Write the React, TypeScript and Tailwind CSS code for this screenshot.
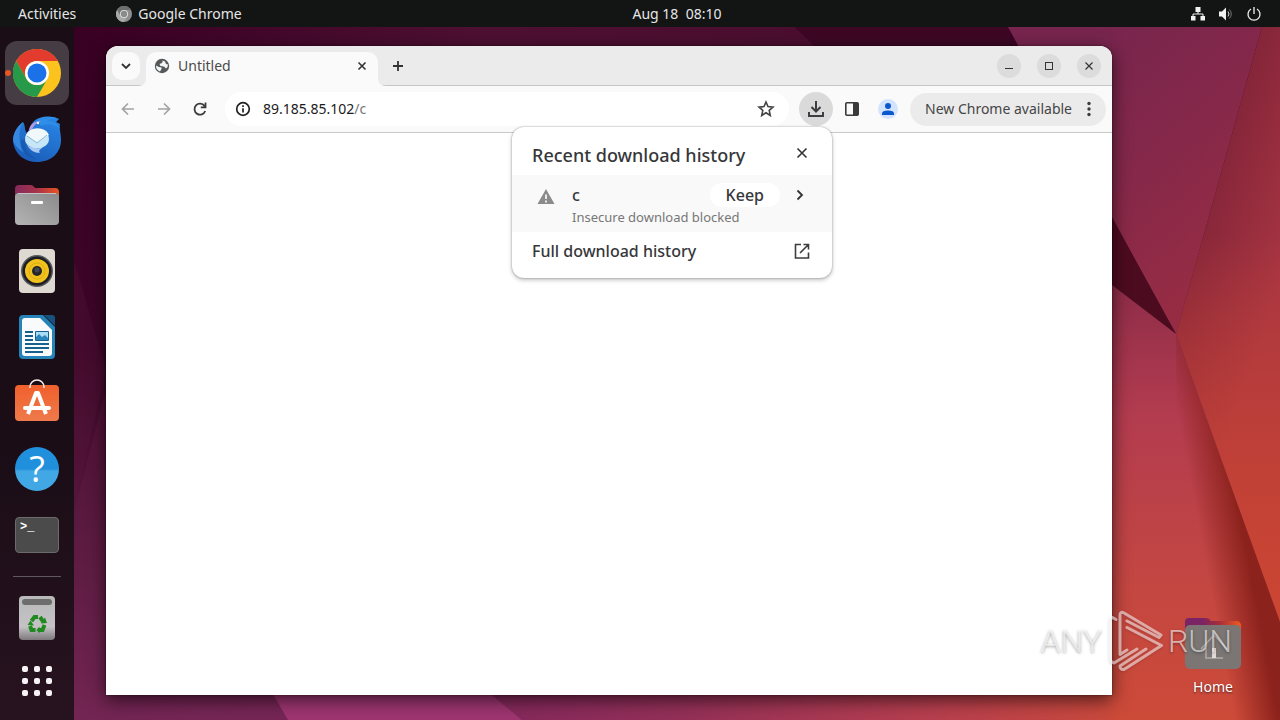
import type { ReactNode } from "react";
import { clsx } from "clsx";

interface DockItem {
  name: string;
  icon: ReactNode;
  active?: boolean;
}

function Wallpaper() {
  return (
    <svg
      className="absolute inset-0 h-full w-full"
      viewBox="0 0 1280 720"
      preserveAspectRatio="none"
      aria-hidden="true"
    >
      <defs>
        <linearGradient id="base" gradientUnits="userSpaceOnUse" x1="80" y1="27" x2="200" y2="720">
          <stop offset="0" stopColor="#380023" />
          <stop offset="0.45" stopColor="#3d0628" />
          <stop offset="0.75" stopColor="#5a1a3f" />
          <stop offset="1" stopColor="#792757" />
        </linearGradient>
        <linearGradient id="top" x1="0" y1="0" x2="1" y2="0">
          <stop offset="0" stopColor="#561538" stopOpacity="0" />
          <stop offset="0.5" stopColor="#561538" stopOpacity="0.7" />
          <stop offset="1" stopColor="#4a0d2e" />
        </linearGradient>
        <linearGradient id="bottom" gradientUnits="userSpaceOnUse" x1="490" y1="0" x2="1130" y2="0">
          <stop offset="0" stopColor="#84285c" />
          <stop offset="0.3" stopColor="#943058" />
          <stop offset="0.7" stopColor="#b83f4e" />
          <stop offset="1" stopColor="#cb4a3a" />
        </linearGradient>
        <linearGradient id="upper" gradientUnits="userSpaceOnUse" x1="1060" y1="60" x2="1230" y2="260">
          <stop offset="0" stopColor="#77254e" />
          <stop offset="0.5" stopColor="#85284a" />
          <stop offset="1" stopColor="#962c44" />
        </linearGradient>
        <linearGradient id="right" gradientUnits="userSpaceOnUse" x1="1200" y1="200" x2="1300" y2="235">
          <stop offset="0" stopColor="#842539" />
          <stop offset="1" stopColor="#a83542" />
        </linearGradient>
        <linearGradient id="warm" x1="0" y1="0" x2="0" y2="1">
          <stop offset="0.35" stopColor="#cc4632" stopOpacity="0" />
          <stop offset="0.75" stopColor="#cc4632" stopOpacity="0.7" />
          <stop offset="1" stopColor="#cc4632" />
        </linearGradient>
        <linearGradient id="lower" x1="0" y1="0" x2="0" y2="1">
          <stop offset="0" stopColor="#8e2c49" />
          <stop offset="0.3" stopColor="#b33c4f" />
          <stop offset="0.7" stopColor="#c44741" />
          <stop offset="1" stopColor="#cc4a38" />
        </linearGradient>
        <linearGradient id="fold" gradientUnits="userSpaceOnUse" x1="1202" y1="545" x2="1244" y2="537">
          <stop offset="0" stopColor="#8c221c" stopOpacity="0" />
          <stop offset="0.5" stopColor="#8c221c" stopOpacity="0.5" />
          <stop offset="1" stopColor="#8c221c" />
        </linearGradient>
      </defs>
      <rect width="1280" height="720" fill="url(#base)" />
      <path d="M74 27H795L870 100H74Z" fill="url(#top)" />
      <path d="M795 27H1010V100H870Z" fill="#3d0724" />
      <path d="M74 260L106 370L74 510Z" fill="#5d1c43" opacity="0.2" />
      <path d="M106 390L74 510V720H287L260 670Z" fill="#6b2450" opacity="0.25" />
      <path d="M259 670L288 720H522L462 670Z" fill="#9e3571" />
      <path d="M462 670L522 720H1130V670Z" fill="url(#bottom)" />
      <path d="M1008 27H1262L1176 334Z" fill="url(#upper)" />
      <path d="M1262 27H1280V622L1176 334Z" fill="url(#right)" />
      <path d="M1262 27H1280V622L1176 334Z" fill="url(#warm)" />
      <path d="M1112 218L1176 334L1112 285L1060 250Z" fill="#4d0b20" />
      <path d="M1112 285L1176 334L1280 622V720H1112Z" fill="url(#lower)" />
      <path d="M1176 334L1280 622V720H1180Z" fill="url(#fold)" />
    </svg>
  );
}

function ChromeLogo({ className, mono = false }: { className?: string; mono?: boolean }) {
  return (
    <svg className={className} viewBox="0 0 48 48" aria-hidden="true">
      <circle cx="24" cy="24" r="24" fill={mono ? "#8f8f8f" : "#fcc31e"} />
      <path
        d="M3.2 12A24 24 0 0 1 44.8 12H24A12 12 0 0 0 13.6 30Z"
        fill={mono ? "#6e6e6e" : "#e33b2e"}
      />
      <path
        d="M3.2 12L13.6 30A12 12 0 0 0 34.4 30L24 48A24 24 0 0 1 3.2 12Z"
        fill={mono ? "#a8a8a8" : "#269a48"}
      />
      <circle cx="24" cy="24" r="12" fill={mono ? "#e3e3e3" : "#fff"} />
      <circle cx="24" cy="24" r="9.5" fill={mono ? "#8a8a8a" : "#1b72e8"} />
    </svg>
  );
}

function ThunderbirdIcon() {
  return (
    <svg className="h-12 w-12" viewBox="0 0 48 48" aria-hidden="true">
      <defs>
        <linearGradient id="bird" x1="0.8" y1="0" x2="0.3" y2="1">
          <stop offset="0" stopColor="#2a86e6" />
          <stop offset="1" stopColor="#1a5cb8" />
        </linearGradient>
      </defs>
      <path
        d="M10 7C3 13 0 19 0 27C2 40 12 47 24 47C38 47 48 38 48 25C48 18 46 14 47 9L43 7L46 4C37 0 27 1 21 6C17 10 17 14 14 18C11 16 13 11 10 7Z"
        fill="url(#bird)"
      />
      <path d="M10 7C5 15 5 29 12 38C4 34 0 28 0 24C1 16 5 11 10 7Z" fill="#3488e0" />
      <path d="M14 22C10 30 13 39 24 44C14 43 6 36 8 26Z" fill="#1450a0" opacity="0.5" />
      <path d="M25 4C32 1 40 1 46 4C41 3 37 4 34 6C42 6 45 10 47 13C38 8 33 9 28 11Z" fill="#2f8fe8" />
      <path d="M16 15C17 9 22 6 28 6C23 8 20 11 19 15Z" fill="#b49be0" />
      <ellipse cx="24" cy="24" rx="12" ry="9.5" fill="#c7e6f8" />
      <path d="M13 20L24 27L36 20A12 9.500 0 0 0 13 20Z" fill="#f0f8fc" />
      <path d="M14 21L24 28L34 20" fill="none" stroke="#8fbbd0" />
      <path d="M14 30C20 34 27 34 31 32C27 34 25 36 27 38C21 38 17 35 14 30Z" fill="#a9c8f4" />
      <circle cx="25" cy="8" r="1.2" fill="#e9f5ff" />
    </svg>
  );
}

function FilesIcon() {
  return (
    <svg className="h-10 w-[46px]" viewBox="0 0 46 40" aria-hidden="true">
      <defs>
        <linearGradient id="tab">
          <stop offset="0" stopColor="#842a5c" />
          <stop offset="0.5" stopColor="#a8324a" />
          <stop offset="1" stopColor="#e95420" />
        </linearGradient>
        <linearGradient id="folder" x1="1" y1="0" x2="0" y2="1">
          <stop offset="0" stopColor="#8b8b8b" />
          <stop offset="1" stopColor="#b4b4b4" />
        </linearGradient>
      </defs>
      <path d="M1 4Q1 0 5 0H17Q19 0 21 3H41Q45 3 45 7V20H1Z" fill="url(#tab)" />
      <rect x="1" y="8" width="44" height="32" rx="4" fill="url(#folder)" />
      <path d="M4 8.500H42" stroke="#c4c4c4" />
      <rect x="17" y="16" width="12" height="3" rx="1" fill="#fff" />
    </svg>
  );
}

function RhythmboxIcon() {
  return (
    <svg className="h-11 w-9" viewBox="0 0 36 44" aria-hidden="true">
      <rect width="36" height="44" rx="4" fill="#dedad2" />
      <circle cx="18" cy="22" r="16" fill="#55585c" />
      <circle cx="18" cy="22" r="14.500" fill="#1c1e22" />
      <circle cx="18" cy="22" r="12" fill="#f2c21c" />
      <circle cx="18" cy="22" r="8" fill="none" stroke="#dcae14" />
      <circle cx="18" cy="22" r="5" fill="#23262b" />
      <circle cx="18" cy="21" r="2.500" fill="#42474f" />
    </svg>
  );
}

function WriterIcon() {
  return (
    <svg className="h-11 w-9" viewBox="0 0 36 44" aria-hidden="true">
      <path d="M4 0H24L36 12V40Q36 44 32 44H4Q0 44 0 40V4Q0 0 4 0Z" fill="#2583b7" />
      <path d="M6 3H21L33 15V38Q33 41 30 41H6Q3 41 3 38V6Q3 3 6 3Z" fill="#f8fafb" />
      <path d="M25 0H33Q36 0 36 3V11Z" fill="#17527c" />
      <g fill="#14608f">
        <path d="M6 16H14V18H6ZM6 20H14V22H6ZM6 24H14V26H6ZM6 28H30V30H6ZM6 32H30V34H6ZM6 36H24V38H6Z" />
        <rect x="16" y="16" width="14" height="10" rx="1" />
      </g>
      <rect x="17" y="17" width="12" height="8" fill="#a9dcf5" />
      <path d="M17 25V22L20 19L23 22L26 20L29 23V25Z" fill="#2b85bc" />
    </svg>
  );
}

function SoftwareIcon() {
  return (
    <svg className="h-12 w-11" viewBox="0 0 44 48" aria-hidden="true">
      <defs>
        <linearGradient id="bag" x1="0" y1="0" x2="0" y2="1">
          <stop offset="0" stopColor="#f0602c" />
          <stop offset="1" stopColor="#ef7a4c" />
        </linearGradient>
      </defs>
      <rect y="6" width="44" height="36" rx="4" fill="url(#bag)" />
      <path d="M15 9V8A7 7 0 0 1 29 8V9" fill="none" stroke="#f4f1ec" strokeWidth="1.500" />
      <path d="M13 35L21 14H23L31 35" fill="none" stroke="#fff" strokeWidth="4" strokeLinejoin="round" />
      <rect x="8" y="27" width="28" height="4" rx="2" fill="#fff" />
    </svg>
  );
}

function HelpIcon() {
  return (
    <span className="flex h-11 w-11 items-center justify-center rounded-full bg-linear-to-b from-[#2190dc] from-50% to-[#42a8e5] to-55% font-['Open_Sans'] text-[36px] leading-none text-white">
      ?
    </span>
  );
}

function TerminalIcon() {
  return (
    <span className="flex h-9 w-11 items-start rounded-[4px] border border-[#6b6b6b] bg-[#4b4b4b] px-1 pt-px font-['Liberation_Mono'] text-[12px] leading-4 font-bold text-white">
      &gt;_
    </span>
  );
}

function TrashIcon() {
  return (
    <svg className="h-11 w-9" viewBox="0 0 36 44" aria-hidden="true">
      <defs>
        <linearGradient id="bin" x1="0" y1="0" x2="0" y2="1">
          <stop offset="0" stopColor="#b9b9b9" />
          <stop offset="0.7" stopColor="#c4c2c5" />
          <stop offset="1" stopColor="#7c787c" />
        </linearGradient>
      </defs>
      <rect width="36" height="44" rx="4" fill="url(#bin)" />
      <rect x="3" y="3" width="30" height="6" rx="3" fill="#6d6d6d" />
      <g fill="none" stroke="#1f8a20" strokeWidth="4">
        <path d="M12.500 25L15.500 21H19" />
        <path d="M21 21L24.500 26" />
        <path d="M25.500 29L23.500 34H19.500" />
        <path d="M16.500 34H12.500L11 30" />
      </g>
      <g fill="#1f8a20">
        <path d="M22 27.500L28 27L26 21.500Z" />
        <path d="M20.500 30.500V37.500L17.500 34Z" />
        <path d="M8.500 29L15 29.500L11.500 24.500Z" />
      </g>
    </svg>
  );
}

function HomeFolderIcon() {
  return (
    <svg className="h-[52px] w-14" viewBox="0 0 56 52" aria-hidden="true">
      <defs>
        <linearGradient id="homeTab">
          <stop offset="0.3" stopColor="#7a2465" />
          <stop offset="0.6" stopColor="#a52c3c" />
          <stop offset="1" stopColor="#f05a22" />
        </linearGradient>
      </defs>
      <path d="M0 5Q0 1 4 1H21Q24 1 26 4H51Q56 4 56 9V20H0Z" fill="url(#homeTab)" />
      <rect y="8" width="56" height="44" rx="5" fill="#7b7673" />
      <path d="M16 32L29 18L42 32M20 41H38M21 31V40" fill="none" stroke="#b4aba8" strokeWidth="1.500" />
      <rect x="27" y="31" width="4" height="10" fill="#e2d8d5" />
    </svg>
  );
}

function Watermark() {
  return (
    <div className="pointer-events-none absolute right-[48px] bottom-[47px] flex h-16 items-center gap-1 font-['Roboto',sans-serif] text-[32px] leading-none font-light text-white/60 [text-shadow:0_1px_3px_#00000060]">
      <span>ANY</span>
      <svg className="h-16 w-[58px] drop-shadow-[0_1px_1px_#00000040]" viewBox="0 0 58 64" fill="none" aria-hidden="true">
        <g stroke="#fff" strokeOpacity="0.550" strokeWidth="3" strokeLinejoin="round" strokeLinecap="round">
          <path d="M10 10.500L6.500 8.500Q4 9 4 12.500V49Q4 53 8 54L31 40" />
          <path d="M21 41L14 45.500V6Q14 2 18 4L55 26L53 28.500L21 12" />
          <path d="M21 18.500L55.500 36.500L18 60.500Q14 61 14 57L40 40" />
        </g>
      </svg>
      <span>RUN</span>
    </div>
  );
}

const dockItems: DockItem[] = [
  { name: "Google Chrome", icon: <ChromeLogo className="h-12 w-12" />, active: true },
  { name: "Thunderbird Mail", icon: <ThunderbirdIcon /> },
  { name: "Files", icon: <FilesIcon /> },
  { name: "Rhythmbox", icon: <RhythmboxIcon /> },
  { name: "LibreOffice Writer", icon: <WriterIcon /> },
  { name: "Ubuntu Software", icon: <SoftwareIcon /> },
  { name: "Help", icon: <HelpIcon /> },
  { name: "Terminal", icon: <TerminalIcon /> },
];

function TopBar() {
  return (
    <header className="relative grid h-[27px] shrink-0 grid-cols-3 items-center bg-[#131414] px-[18px] text-[14px] leading-5 text-[#e6e6e6]">
      <div className="flex items-center gap-10">
        <button type="button">Activities</button>
        <button type="button" className="flex items-center gap-1.5">
          <ChromeLogo className="h-4 w-4" mono />
          Google Chrome
        </button>
      </div>
      {/* centred over the area right of the dock */}
      <button type="button" className="ml-[74px] justify-self-center whitespace-pre">
        Aug 18{"  "}08:10
      </button>
      <button type="button" className="flex items-center gap-3 justify-self-end" aria-label="System menu">
        <svg className="h-4 w-4" viewBox="0 0 16 16" fill="#f2f2f2" aria-hidden="true">
          <path d="M5.500 1H10.500V6H5.500ZM1 10H5.500V14.500H1ZM10.500 10H15V14.500H10.500Z" />
          <path d="M8 5V8M3 11V8H13V11" fill="none" stroke="#f2f2f2" />
        </svg>
        <svg className="h-4 w-4" viewBox="0 0 16 16" fill="#f2f2f2" aria-hidden="true">
          <path d="M1 5.500H4L8 1.500V14.500L4 10.500H1Z" />
          <path d="M10 5.500Q12 8 10 10.500" fill="none" stroke="#d8d8d8" />
          <path d="M11.500 3.500Q15 8 11.500 12.500" fill="none" stroke="#777" />
        </svg>
        <svg className="h-4 w-4" viewBox="0 0 16 16" fill="none" stroke="#f2f2f2" aria-hidden="true">
          <path d="M8 1V8M5 3A6 6 0 1 0 11 3" strokeWidth="1.300" />
        </svg>
      </button>
    </header>
  );
}

function Dock() {
  return (
    <nav className="flex w-[74px] shrink-0 flex-col items-center bg-linear-to-b from-[#1a0d16] from-60% to-[#27131f] pt-3.5" aria-label="Dock">
      <ul className="flex flex-col gap-0.5">
        {dockItems.map((item) => (
          <li key={item.name} className="relative">
            {item.active && (
              <span className="absolute top-[29px] left-0 h-1.5 w-1.5 rounded-full bg-[#e95420]" />
            )}
            <button
              type="button"
              aria-label={item.name}
              className={clsx(
                "flex h-16 w-16 items-center justify-center rounded-xl",
                item.active && "bg-[#463c43]"
              )}
            >
              {item.icon}
            </button>
          </li>
        ))}
      </ul>
      <hr className="mt-[9px] w-12 border-[#615760]" />
      <button type="button" aria-label="Trash" className="mt-[9px] flex h-16 w-16 items-center justify-center">
        <TrashIcon />
      </button>
      <button type="button" aria-label="Show Applications" className="flex h-16 w-16 items-center justify-center pb-0.5">
        <span className="grid grid-cols-3 gap-1.5">
          {Array.from({ length: 9 }, (_, i) => (
            <span key={i} className="h-1.5 w-1.5 rounded-[2px] bg-[#f7f3f5]" />
          ))}
        </span>
      </button>
    </nav>
  );
}

function TabStrip() {
  return (
    <div className="flex h-10 bg-[#ebebeb] shadow-[inset_0_-1px_#c6c6c6]">
      <div className="relative z-10 flex w-10 items-center justify-center">
        <button type="button" aria-label="Search tabs" className="flex h-7 w-7 items-center justify-center rounded-[10px] bg-[#fafafa]">
          <svg className="h-2 w-3" viewBox="0 0 12 8" fill="none" stroke="#333" strokeWidth="1.800" aria-hidden="true">
            <path d="M2 2L6 6L10 2" />
          </svg>
        </button>
      </div>
      <div className="relative flex h-[34px] w-[232px] items-center gap-2 self-end rounded-t-[10px] bg-[#fafafa] pr-2 pb-1.5 pl-2">
        <svg className="absolute bottom-0 -left-2 h-2 w-2" viewBox="0 0 8 8" fill="#fafafa" aria-hidden="true">
          <path d="M8 0V8H0Q8 8 8 0Z" />
        </svg>
        <svg className="absolute -right-2 bottom-0 h-2 w-2" viewBox="0 0 8 8" fill="#fafafa" aria-hidden="true">
          <path d="M0 0V8H8Q0 8 0 0Z" />
        </svg>
        <svg className="h-4 w-4" viewBox="0 0 16 16" aria-hidden="true">
          <circle cx="8" cy="8" r="7.200" fill="#55585b" />
          <path d="M2 7.500L5 9L7.500 9.500V11L6 13.500Q2 12 2 7.500ZM7 2L9 2.500L8 5L5.500 6L6.500 8L10 8.500L12 10.500L13.500 9L14 6.500L12 6L11 3.500Z" fill="#f5f5f5" />
        </svg>
        <span className="grow text-[14px] leading-5 text-[#4a4a4a]">Untitled</span>
        <button type="button" aria-label="Close tab" className="flex h-4 w-4 items-center justify-center">
          <svg className="h-2.5 w-2.5" viewBox="0 0 10 10" stroke="#333" strokeWidth="1.600" aria-hidden="true">
            <path d="M1.500 1.500L8.500 8.500M8.500 1.500L1.500 8.500" />
          </svg>
        </button>
      </div>
      <button type="button" aria-label="New tab" className="ml-1.5 flex w-7 items-center justify-center">
        <svg className="h-3 w-3" viewBox="0 0 12 12" stroke="#333" strokeWidth="1.800" aria-hidden="true">
          <path d="M6 1V11M1 6H11" />
        </svg>
      </button>
      <div className="ml-auto flex items-center gap-4 pr-[11px]">
        <button type="button" aria-label="Minimize" className="flex h-6 w-6 items-center justify-center rounded-full bg-[#dcdcdc]">
          <svg className="h-2.5 w-2.5" viewBox="0 0 10 10" stroke="#333" aria-hidden="true">
            <path d="M1 7.500H9" />
          </svg>
        </button>
        <button type="button" aria-label="Maximize" className="flex h-6 w-6 items-center justify-center rounded-full bg-[#dcdcdc]">
          <span className="h-2 w-2 border border-[#333]" />
        </button>
        <button type="button" aria-label="Close" className="flex h-6 w-6 items-center justify-center rounded-full bg-[#dcdcdc]">
          <svg className="h-2.5 w-2.5" viewBox="0 0 10 10" stroke="#333" strokeWidth="1.200" aria-hidden="true">
            <path d="M1.500 1.500L8.500 8.500M8.500 1.500L1.500 8.500" />
          </svg>
        </button>
      </div>
    </div>
  );
}

function DownloadsPopup() {
  return (
    <section
      aria-label="Recent download history"
      className="absolute top-[35px] right-px z-20 w-[320px] rounded-xl bg-white pb-[15px] text-[#36373a] shadow-[0_0_2px_#00000055,0_2px_4px_#00000040]"
    >
      <div className="flex h-12 items-center justify-between px-5 pt-2">
        <h2 className="text-[18px] leading-6 font-medium whitespace-nowrap">Recent download history</h2>
        <button type="button" aria-label="Close" className="flex h-5 w-5 items-center justify-center pb-1">
          <svg className="h-3 w-3" viewBox="0 0 12 12" stroke="#333" strokeWidth="1.600" aria-hidden="true">
            <path d="M1.500 1.500L10.500 10.500M10.500 1.500L1.500 10.500" />
          </svg>
        </button>
      </div>
      <div className="flex bg-[#f9f9f9] pt-2 pr-6 pb-[5px] pl-6">
        <svg className="mt-1 h-5 w-5" viewBox="0 0 20 20" aria-hidden="true">
          <path d="M10 2L18.500 17H1.500Z" fill="#8b8b8b" />
          <path d="M10 7.500V12M10 13.500V15.500" stroke="#f4f4f4" strokeWidth="1.800" />
        </svg>
        <div className="ml-4 grow">
          <div className="flex h-6 items-center">
            <span className="grow text-[16px] leading-6 font-medium">c</span>
            <button type="button" className="h-6 rounded-full bg-white px-4 text-[16px] leading-6 font-medium">
              Keep
            </button>
            <button type="button" aria-label="Show details" className="ml-3 flex h-4 w-4 items-center justify-center">
              <svg className="h-3 w-2" viewBox="0 0 8 12" fill="none" stroke="#333" strokeWidth="1.800" aria-hidden="true">
                <path d="M1.500 1.500L6 6L1.500 10.500" />
              </svg>
            </button>
          </div>
          <p className="text-[13px] leading-5 whitespace-nowrap text-[#777]">Insecure download blocked</p>
        </div>
      </div>
      <a href="#downloads" className="flex items-center justify-between px-5 pt-[7px] text-[16px] leading-6 font-medium">
        Full download history
        <svg className="h-5 w-5" viewBox="0 0 20 20" fill="none" stroke="#3c3d40" strokeWidth="1.600" aria-hidden="true">
          <path d="M9 3.500H3.500V17H16.500V11.500M11.500 3.500H16.500V8.500M16.500 3.500L8 12" />
        </svg>
      </a>
    </section>
  );
}

function Toolbar() {
  return (
    <div className="flex h-[47px] items-center border-b border-[#c9c9c9] bg-[#fafafa] pr-1.5 pl-3">
      <div className="flex items-center gap-4">
        <button type="button" aria-label="Back" className="flex h-5 w-5 items-center justify-center">
          <svg className="h-4 w-4" viewBox="0 0 16 16" fill="none" stroke="#a3a3a3" strokeWidth="1.700" aria-hidden="true">
            <path d="M14 8H3M8 2.500L2.500 8L8 13.500" />
          </svg>
        </button>
        <button type="button" aria-label="Forward" className="flex h-5 w-5 items-center justify-center">
          <svg className="h-4 w-4" viewBox="0 0 16 16" fill="none" stroke="#a3a3a3" strokeWidth="1.700" aria-hidden="true">
            <path d="M2 8H13M8 2.500L13.500 8L8 13.500" />
          </svg>
        </button>
        <button type="button" aria-label="Reload" className="flex h-5 w-5 items-center justify-center">
          <svg className="h-4 w-4" viewBox="0 0 16 16" fill="none" stroke="#3c3c3c" strokeWidth="1.800" aria-hidden="true">
            <path d="M13.200 10A5.500 5.500 0 1 1 12.500 5L13.500 6.200M13.500 1.500V6.300H8.800" />
          </svg>
        </button>
      </div>
      <div className="ml-[15px] flex h-[34px] grow items-center rounded-full bg-white pr-[13px] pl-2.5">
        <svg className="h-4 w-4" viewBox="0 0 16 16" fill="none" stroke="#222" strokeWidth="1.700" aria-hidden="true">
          <circle cx="8" cy="8" r="6.300" />
          <path d="M8 7.200V11.500M8 4.300V6" />
        </svg>
        {/* real field with the host/path colouring painted over it */}
        <label className="relative ml-3 grow text-[14px] leading-5">
          <input
            aria-label="Address"
            defaultValue="89.185.85.102/c"
            className="block w-full bg-transparent text-transparent outline-none"
          />
          <span className="pointer-events-none absolute inset-0 text-[#777]" aria-hidden="true">
            <span className="text-[#1b1b1b]">89.185.85.102</span>/c
          </span>
        </label>
        <button type="button" aria-label="Bookmark this tab" className="h-5 w-5">
          <svg className="h-5 w-5" viewBox="0 0 20 20" fill="none" stroke="#444" strokeWidth="1.600" aria-hidden="true">
            <path d="M10 3L12 7.600L17 8.100L13.200 11.400L14.300 16.500L10 13.800L5.700 16.500L6.800 11.400L3 8.100L8 7.600Z" />
          </svg>
        </button>
      </div>
      <div className="relative ml-2.5 flex">
        <button type="button" aria-label="Downloads" className="flex h-[34px] w-[34px] items-center justify-center rounded-full bg-[#dadada]">
          <svg className="h-5 w-5" viewBox="0 0 20 20" fill="none" stroke="#3c3d40" strokeWidth="2" aria-hidden="true">
            <path d="M10 2V12.500M5.500 8L10 12.500L14.500 8M3 13V17H17V13" />
          </svg>
        </button>
        <DownloadsPopup />
      </div>
      <button type="button" aria-label="Side panel" className="ml-[9px] flex h-5 w-5 items-center justify-center">
        <svg className="h-4 w-4" viewBox="0 0 16 16" aria-hidden="true">
          <rect x="1.800" y="1.800" width="12.400" height="12.400" rx="1" fill="none" stroke="#3a3a3a" strokeWidth="1.600" />
          <path d="M9 2H14V14H9Z" fill="#3a3a3a" />
        </svg>
      </button>
      <button type="button" aria-label="Profile" className="ml-4 h-5 w-5">
        <svg className="h-5 w-5" viewBox="0 0 20 20" aria-hidden="true">
          <circle cx="10" cy="10" r="10" fill="#d3e3fd" />
          <circle cx="10" cy="7" r="3" fill="#0b57d0" />
          <path d="M4 16V14.500Q4 11.500 10 11.500Q16 11.500 16 14.500V16Z" fill="#0b57d0" />
        </svg>
      </button>
      <button type="button" className="ml-3 flex h-[33px] w-[196px] items-center justify-between rounded-full bg-[#ebebeb] pr-[15px] pl-[15px] text-[14px] leading-5 whitespace-nowrap text-[#454545]">
        New Chrome available
        <svg className="h-4 w-1" viewBox="0 0 4 16" fill="#3c3c3c" aria-hidden="true">
          <circle cx="2" cy="2.500" r="1.700" />
          <circle cx="2" cy="8" r="1.700" />
          <circle cx="2" cy="13.500" r="1.700" />
        </svg>
      </button>
    </div>
  );
}

export default function App() {
  return (
    <div className="relative flex min-h-screen flex-col overflow-hidden bg-[#380023] font-['Noto_Sans','Open_Sans',sans-serif]">
      <Wallpaper />
      <TopBar />
      <div className="relative flex grow">
        <Dock />
        <main className="relative flex grow pt-[19px] pr-[168px] pb-[25px] pl-8">
          <div className="flex grow flex-col rounded-t-xl bg-white shadow-[0_0_2px_#00000090,0_5px_18px_#000000a0]">
            <div className="overflow-hidden rounded-t-xl">
              <TabStrip />
            </div>
            <Toolbar />
          </div>
          <button type="button" className="absolute right-[39px] bottom-[23px] flex flex-col items-center gap-2 text-[14px] leading-5 text-white [text-shadow:0_1px_2px_#00000090]">
            <HomeFolderIcon />
            Home
          </button>
          <Watermark />
        </main>
      </div>
    </div>
  );
}
